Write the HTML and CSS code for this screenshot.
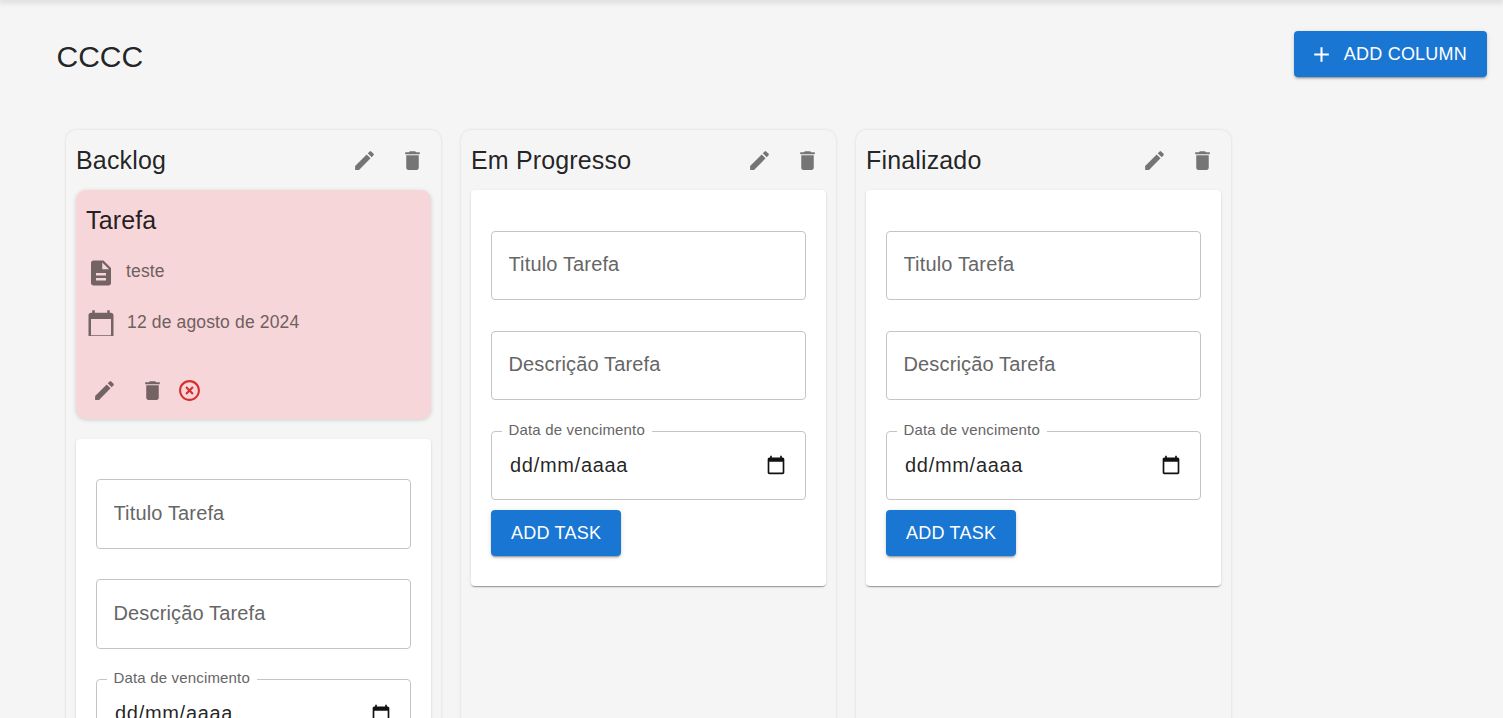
FILE: index.html
```html
<!DOCTYPE html>
<html lang="pt-BR">
<head>
  <meta charset="UTF-8">
  <meta name="viewport" content="width=device-width, initial-scale=1.0">
  <title>CCCC</title>
  <link rel="stylesheet" href="styles.css">
</head>
<body>
  <div class="topbar"></div>

  <header class="board-header">
    <h1>CCCC</h1>
    <button class="btn btn-column">
      <svg class="plus" viewBox="0 0 24 24"><path d="M19 13h-6v6h-2v-6H5v-2h6V5h2v6h6v2z"/></svg>
      ADD COLUMN
    </button>
  </header>

  <main class="board">
    <section class="column">
      <div class="column-head">
        <h2>Backlog</h2>
        <div class="column-actions">
          <button class="icon-btn"><svg viewBox="0 0 24 24"><path d="M3 17.25V21h3.75L17.81 9.94l-3.75-3.75L3 17.25zM20.71 7.04c.39-.39.39-1.02 0-1.41l-2.34-2.34a.9959.9959 0 0 0-1.41 0l-1.83 1.83 3.75 3.75 1.83-1.83z"/></svg></button>
          <button class="icon-btn"><svg viewBox="0 0 24 24"><path d="M6 19c0 1.1.9 2 2 2h8c1.1 0 2-.9 2-2V7H6v12zM19 4h-3.5l-1-1h-5l-1 1H5v2h14V4z"/></svg></button>
        </div>
      </div>

      <article class="task">
        <h3>Tarefa</h3>
        <div class="task-row">
          <svg class="task-icon" viewBox="0 0 24 24"><path d="M14 2H6c-1.1 0-1.99.9-1.99 2L4 20c0 1.1.89 2 1.99 2H18c1.1 0 2-.9 2-2V8l-6-6zm2 16H8v-2h8v2zm0-4H8v-2h8v2zm-3-5V3.5L18.5 9H13z"/></svg>
          <span class="task-text">teste</span>
        </div>
        <div class="task-row task-row-date">
          <svg class="task-icon task-icon-cal" viewBox="0 0 24 21.6"><path d="M20 3h-1V1h-2v2H7V1H5v2H4c-1.1 0-2 .9-2 2v16c0 1.1.9 2 2 2h16c1.1 0 2-.9 2-2V5c0-1.1-.9-2-2-2zm0 18H4V8h16v13z"/></svg>
          <span class="task-text">12 de agosto de 2024</span>
        </div>
        <div class="task-actions">
          <button class="icon-btn"><svg viewBox="0 0 24 24"><path d="M3 17.25V21h3.75L17.81 9.94l-3.75-3.75L3 17.25zM20.71 7.04c.39-.39.39-1.02 0-1.41l-2.34-2.34a.9959.9959 0 0 0-1.41 0l-1.83 1.83 3.75 3.75 1.83-1.83z"/></svg></button>
          <button class="icon-btn"><svg viewBox="0 0 24 24"><path d="M6 19c0 1.1.9 2 2 2h8c1.1 0 2-.9 2-2V7H6v12zM19 4h-3.5l-1-1h-5l-1 1H5v2h14V4z"/></svg></button>
          <svg class="late-icon" viewBox="0 0 24 24"><path d="M14.59 8 12 10.59 9.41 8 8 9.41 10.59 12 8 14.59 9.41 16 12 13.41 14.59 16 16 14.59 13.41 12 16 9.41 14.59 8zM12 2C6.47 2 2 6.47 2 12s4.47 10 10 10 10-4.47 10-10S17.53 2 12 2zm0 18c-4.41 0-8-3.59-8-8s3.59-8 8-8 8 3.59 8 8-3.59 8-8 8z"/></svg>
        </div>
      </article>

      <form class="task-form">
        <input class="field" type="text" placeholder="Titulo Tarefa">
        <input class="field" type="text" placeholder="Descrição Tarefa">
        <div class="field date-field">
          <span class="date-label">Data de vencimento</span>
          <span class="date-value">dd/mm/aaaa</span>
          <svg class="date-icon" viewBox="0 0 24 24"><path d="M20 3h-1V1h-2v2H7V1H5v2H4c-1.1 0-2 .9-2 2v16c0 1.1.9 2 2 2h16c1.1 0 2-.9 2-2V5c0-1.1-.9-2-2-2zm0 18H4V8h16v13z"/></svg>
        </div>
        <button type="button" class="btn btn-task">ADD TASK</button>
      </form>
    </section>

    <section class="column">
      <div class="column-head">
        <h2>Em Progresso</h2>
        <div class="column-actions">
          <button class="icon-btn"><svg viewBox="0 0 24 24"><path d="M3 17.25V21h3.75L17.81 9.94l-3.75-3.75L3 17.25zM20.71 7.04c.39-.39.39-1.02 0-1.41l-2.34-2.34a.9959.9959 0 0 0-1.41 0l-1.83 1.83 3.75 3.75 1.83-1.83z"/></svg></button>
          <button class="icon-btn"><svg viewBox="0 0 24 24"><path d="M6 19c0 1.1.9 2 2 2h8c1.1 0 2-.9 2-2V7H6v12zM19 4h-3.5l-1-1h-5l-1 1H5v2h14V4z"/></svg></button>
        </div>
      </div>

      <form class="task-form">
        <input class="field" type="text" placeholder="Titulo Tarefa">
        <input class="field" type="text" placeholder="Descrição Tarefa">
        <div class="field date-field">
          <span class="date-label">Data de vencimento</span>
          <span class="date-value">dd/mm/aaaa</span>
          <svg class="date-icon" viewBox="0 0 24 24"><path d="M20 3h-1V1h-2v2H7V1H5v2H4c-1.1 0-2 .9-2 2v16c0 1.1.9 2 2 2h16c1.1 0 2-.9 2-2V5c0-1.1-.9-2-2-2zm0 18H4V8h16v13z"/></svg>
        </div>
        <button type="button" class="btn btn-task">ADD TASK</button>
      </form>
    </section>

    <section class="column">
      <div class="column-head">
        <h2>Finalizado</h2>
        <div class="column-actions">
          <button class="icon-btn"><svg viewBox="0 0 24 24"><path d="M3 17.25V21h3.75L17.81 9.94l-3.75-3.75L3 17.25zM20.71 7.04c.39-.39.39-1.02 0-1.41l-2.34-2.34a.9959.9959 0 0 0-1.41 0l-1.83 1.83 3.75 3.75 1.83-1.83z"/></svg></button>
          <button class="icon-btn"><svg viewBox="0 0 24 24"><path d="M6 19c0 1.1.9 2 2 2h8c1.1 0 2-.9 2-2V7H6v12zM19 4h-3.5l-1-1h-5l-1 1H5v2h14V4z"/></svg></button>
        </div>
      </div>

      <form class="task-form">
        <input class="field" type="text" placeholder="Titulo Tarefa">
        <input class="field" type="text" placeholder="Descrição Tarefa">
        <div class="field date-field">
          <span class="date-label">Data de vencimento</span>
          <span class="date-value">dd/mm/aaaa</span>
          <svg class="date-icon" viewBox="0 0 24 24"><path d="M20 3h-1V1h-2v2H7V1H5v2H4c-1.1 0-2 .9-2 2v16c0 1.1.9 2 2 2h16c1.1 0 2-.9 2-2V5c0-1.1-.9-2-2-2zm0 18H4V8h16v13z"/></svg>
        </div>
        <button type="button" class="btn btn-task">ADD TASK</button>
      </form>
    </section>
  </main>
</body>
</html>
```

FILE: styles.css
```css
* { box-sizing: border-box; }
html, body { height: 100%; }
body { margin: 0; overflow: hidden; background: #f5f5f5; color: rgba(0,0,0,0.87); font-family: "Liberation Sans", Arial, sans-serif; }

.topbar { height: 0; box-shadow: 0 0 6px 2px rgba(0,0,0,0.16); }

.board-header { display: flex; justify-content: space-between; align-items: flex-start; padding: 31px 16px 0 56.5px; height: 130px; }
.board-header h1 { margin: 8px 0 0; font-size: 30px; line-height: 36px; font-weight: 400; }

.btn { display: inline-flex; align-items: center; border: 0; border-radius: 4px; background: #1976d2; color: #fff; font-family: inherit; font-size: 18px; line-height: 26px; font-weight: 400; letter-spacing: 0.22px; box-shadow: 0 3px 1px -2px rgba(0,0,0,0.2), 0 2px 2px 0 rgba(0,0,0,0.14), 0 1px 5px 0 rgba(0,0,0,0.12); }
.btn-column { height: 46px; padding: 0 20px 0 15px; }
.plus { width: 25px; height: 25px; margin-right: 10px; fill: #fff; }
.btn-task { height: 46px; padding: 0 20px; }

.board { display: flex; gap: 20px; padding-left: 66px; align-items: stretch; }
.column { width: 375px; padding: 0 10px; background: #f5f5f5; border-radius: 10px; box-shadow: 0 0 3px rgba(0,0,0,0.12); }
.column-head { display: flex; justify-content: space-between; align-items: center; height: 60px; }
.column-head h2 { margin: 0; font-size: 25px; font-weight: 400; line-height: 30px; letter-spacing: 0.15px; }
.column-actions { display: flex; gap: 8px; margin-right: -1.5px; }

.icon-btn { width: 40px; height: 40px; padding: 7.5px; border: 0; background: none; }
.icon-btn svg { display: block; width: 25px; height: 25px; fill: #757575; }

.task { height: 228.6px; margin-bottom: 20px; padding: 10px; border-radius: 10px; background: #f7d6d9; box-shadow: 0 1px 4px rgba(0,0,0,0.16); color: rgba(0,0,0,0.87); }
.task h3 { margin: 5px 0 0; font-size: 25px; font-weight: 400; line-height: 30px; letter-spacing: 0.15px; }
.task-row { display: flex; align-items: flex-start; margin-top: 22.5px; }
.task-row-date { margin-top: 21.5px; }
.task-icon { flex: none; width: 30px; height: 30px; margin-right: 10px; fill: #736363; }
.task-icon-cal { height: 27px; margin-right: 11px; }
.task-text { font-size: 17.5px; line-height: 26px; letter-spacing: 0.15px; color: #6f5f5f; }
.task-actions { display: flex; align-items: center; margin: 34.5px 0 0 -1.7px; }
.task-actions .icon-btn { margin-right: 8px; }
.task-actions .icon-btn svg { fill: #736363; }
.late-icon { width: 25px; height: 25px; margin-left: -3.5px; fill: #d32f2f; }

.task-form { display: flex; flex-direction: column; align-items: flex-start; padding: 40.6px 20px 30px; background: #fff; border-radius: 4px; box-shadow: 0 2px 1px -1px rgba(0,0,0,0.2), 0 1px 1px 0 rgba(0,0,0,0.14), 0 1px 3px 0 rgba(0,0,0,0.12); }
.field { display: block; width: 100%; height: 69.5px; margin-bottom: 30.5px; padding: 0 16.5px 1px; border: 1px solid #c4c4c4; border-radius: 4px; background: #fff; color: rgba(0,0,0,0.87); font-family: inherit; font-size: 20px; letter-spacing: 0.15px; outline: none; }
.field::placeholder { color: #666; opacity: 1; }
.date-field { position: relative; display: flex; align-items: center; justify-content: space-between; margin-bottom: 10.4px; padding-bottom: 0; }
.date-label { position: absolute; top: -11px; left: 9.5px; padding: 0 7px; background: #fff; color: #666; font-size: 15px; line-height: 18px; letter-spacing: 0.17px; }
.date-value { margin-left: 1.5px; letter-spacing: 0.7px; }
.date-icon { width: 20px; height: 20px; margin-right: 2.5px; fill: #111; }
```
